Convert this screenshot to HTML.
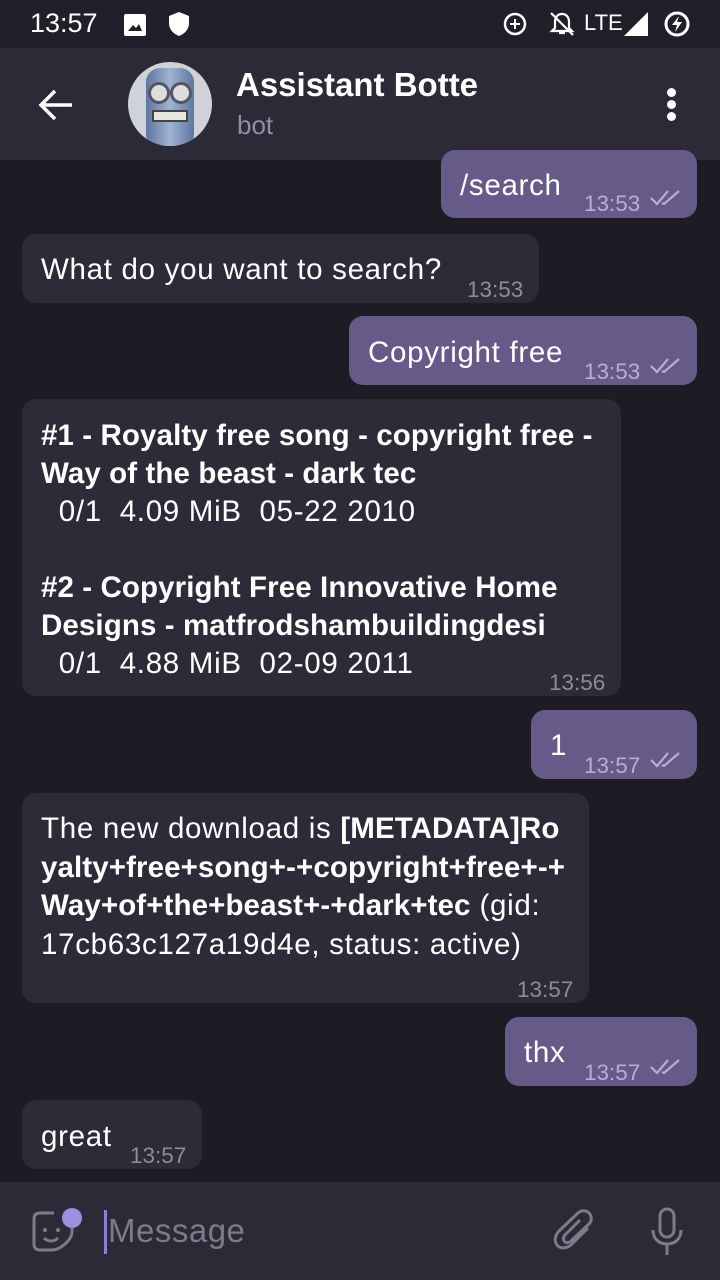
<!DOCTYPE html>
<html><head><meta charset="utf-8"><style>
*{margin:0;padding:0;box-sizing:border-box}
body{width:720px;height:1280px;background:#1d1b24;font-family:"Liberation Sans",sans-serif;position:relative;overflow:hidden;color:#fff}
.sb{position:absolute;top:0;left:0;width:720px;height:48px;background:#221f2b}
.hd{position:absolute;top:48px;left:0;width:720px;height:112px;background:#2d2a38}
.b{position:absolute;font-size:29.5px;line-height:38px;border-radius:14px;padding:0 19px;letter-spacing:.7px;white-space:nowrap}
.in{background:#2e2b38;left:22px}
.out{background:#655a88;right:23px}
.t{position:absolute;font-size:22.5px;color:#8f8b99;letter-spacing:0}
.out .t{color:#b7addb}
.ck{position:absolute}
b{font-weight:bold;letter-spacing:.1px}
.cp{position:absolute;top:1182px;left:0;width:720px;height:98px;background:#2d2a38}
</style></head><body>
<div class="sb">
<div style="position:absolute;left:30px;top:8px;font-size:27px">13:57</div>
<div style="position:absolute;left:124px;top:14px;width:22px;height:22px;background:#fff;border-radius:2px"><svg width="22" height="22"><path d="M4 17 L9 11 L12 14 L15 10 L18 17Z" fill="#221f2b"/></svg></div>
<svg style="position:absolute;left:168px;top:11px" width="22" height="26"><path d="M11 1 L21 5 V12 C21 19 16 23 11 25 C6 23 1 19 1 12 V5Z" fill="#fff"/></svg>
<svg style="position:absolute;left:502px;top:11px" width="26" height="26"><circle cx="13" cy="13" r="10" fill="none" stroke="#fff" stroke-width="2.5"/><path d="M13 8v10M8 13h10" stroke="#fff" stroke-width="2"/></svg>
<svg style="position:absolute;left:548px;top:10px" width="28" height="28"><path d="M14 4 C9 4 7 8 7 12 V18 L4 21 H24 L21 18 V12 C21 8 19 4 14 4Z M11 23 H17" fill="none" stroke="#fff" stroke-width="2.2"/><path d="M3 3 L25 25" stroke="#fff" stroke-width="2.2"/></svg>
<div style="position:absolute;left:584px;top:10px;font-size:22px">LTE</div>
<svg style="position:absolute;left:624px;top:12px" width="26" height="24"><path d="M24 0 V24 H0Z" fill="#fff"/></svg>
<svg style="position:absolute;left:662px;top:9px" width="30" height="30"><circle cx="15" cy="15" r="11" fill="none" stroke="#fff" stroke-width="3"/><path d="M17 7 L10 16 H15 L13 23 L20 13 H15Z" fill="#fff"/></svg>
</div>
<div class="hd">
<svg style="position:absolute;left:38px;top:40px" width="36" height="34"><path d="M34 17 H4 M17 3 L3 17 L17 31" fill="none" stroke="#fff" stroke-width="3.5"/></svg>
<div style="position:absolute;left:128px;top:14px;width:84px;height:84px;border-radius:50%;background:#cfd2d6;overflow:hidden">
<div style="position:absolute;left:18px;top:6px;width:48px;height:80px;border-radius:14px;background:linear-gradient(90deg,#5d76a0,#9fb3d2,#5d76a0)"></div>
<div style="position:absolute;left:20px;top:20px;width:22px;height:22px;border-radius:50%;background:#ddd;border:3px solid #556"></div>
<div style="position:absolute;left:42px;top:20px;width:22px;height:22px;border-radius:50%;background:#ddd;border:3px solid #556"></div>
<div style="position:absolute;left:24px;top:48px;width:36px;height:12px;background:#e8e8e0;border:2px solid #444"></div>
</div>
<div style="position:absolute;left:236px;top:18px;font-size:33px;font-weight:bold">Assistant Botte</div>
<div style="position:absolute;left:237px;top:62px;font-size:26px;color:#928da0">bot</div>
<div style="position:absolute;left:667px;top:40px;width:9px;height:9px;border-radius:50%;background:#fff;box-shadow:0 12px 0 #fff,0 24px 0 #fff"></div>
</div>

<div class="b out" style="top:150px;left:441px;right:auto;width:256px;height:68px;padding-top:17px">/search<span class="t" style="left:143px;top:35px">13:53</span><svg class="ck" style="left:208px;top:38px" width="36" height="20"><path d="M2 10 L8 16 L19 3 M13 15 L15 16 L30 3" fill="none" stroke="#b7addb" stroke-width="2.2"/></svg></div>

<div class="b in" style="top:234px;width:517px;height:69px;padding-top:17px">What do you want to search?<span class="t" style="left:445px;top:37px">13:53</span></div>

<div class="b out" style="top:316px;left:349px;right:auto;width:348px;height:69px;padding-top:18px">Copyright free<span class="t" style="left:235px;top:37px">13:53</span><svg class="ck" style="left:300px;top:40px" width="36" height="20"><path d="M2 10 L8 16 L19 3 M13 15 L15 16 L30 3" fill="none" stroke="#b7addb" stroke-width="2.2"/></svg></div>

<div class="b in" style="top:399px;width:599px;height:297px;padding-top:18px"><b>#1 - Royalty free song - copyright free -<br>Way of the beast - dark tec</b><br>&nbsp; 0/1&nbsp; 4.09 MiB&nbsp; 05-22 2010<br><br><b>#2 - Copyright Free Innovative Home<br>Designs - matfrodshambuildingdesi</b><br>&nbsp; 0/1&nbsp; 4.88 MiB&nbsp; 02-09 2011<span class="t" style="left:527px;top:265px">13:56</span></div>

<div class="b out" style="top:710px;left:531px;right:auto;width:166px;height:69px;padding-top:17px">1<span class="t" style="left:53px;top:37px">13:57</span><svg class="ck" style="left:118px;top:40px" width="36" height="20"><path d="M2 10 L8 16 L19 3 M13 15 L15 16 L30 3" fill="none" stroke="#b7addb" stroke-width="2.2"/></svg></div>

<div class="b in" style="top:793px;width:567px;height:210px;padding-top:17px;line-height:38.5px">The new download is <b>[METADATA]Ro<br>yalty+free+song+-+copyright+free+-+<br>Way+of+the+beast+-+dark+tec</b> (gid:<br>17cb63c127a19d4e, status: active)<span class="t" style="left:495px;top:178px">13:57</span></div>

<div class="b out" style="top:1017px;left:505px;right:auto;width:192px;height:69px;padding-top:17px">thx<span class="t" style="left:79px;top:37px">13:57</span><svg class="ck" style="left:144px;top:40px" width="36" height="20"><path d="M2 10 L8 16 L19 3 M13 15 L15 16 L30 3" fill="none" stroke="#b7addb" stroke-width="2.2"/></svg></div>

<div class="b in" style="top:1100px;width:180px;height:69px;padding-top:18px">great<span class="t" style="left:108px;top:37px">13:57</span></div>

<div class="cp">
<svg style="position:absolute;left:30px;top:26px" width="52" height="50"><path d="M24 5 H10 C6 5 4 7 4 11 V36 C4 40 6 42 10 42 H22 C30 42 42 32 42 24 V16" fill="none" stroke="#7e7a8a" stroke-width="3"/><circle cx="15" cy="22" r="2" fill="#7e7a8a"/><circle cx="28" cy="22" r="2" fill="#7e7a8a"/><path d="M14 30 C18 34 24 34 28 30" fill="none" stroke="#7e7a8a" stroke-width="3"/><circle cx="42" cy="10" r="10" fill="#9b8fe0"/></svg>
<div style="position:absolute;left:104px;top:28px;width:3px;height:44px;background:#8b7fd9"></div>
<div style="position:absolute;left:108px;top:30px;font-size:33px;color:#7e7a8a;letter-spacing:.5px">Message</div>
<svg style="position:absolute;left:552px;top:26px" width="46" height="48"><path d="M36 20 L20 36 C15 41 8 41 5 37 C2 33 3 27 7 23 L26 5 C29 2 34 2 37 5 C40 8 40 13 37 16 L19 33 C17 35 14 35 13 34 C11 32 11 29 13 27 L28 12" fill="none" stroke="#7e7a8a" stroke-width="3"/></svg>
<svg style="position:absolute;left:648px;top:24px" width="40" height="52"><rect x="12" y="3" width="14" height="28" rx="7" fill="none" stroke="#7e7a8a" stroke-width="3"/><path d="M5 24 C5 33 11 38 19 38 C27 38 33 33 33 24 M19 38 V49" fill="none" stroke="#7e7a8a" stroke-width="3"/></svg>
</div>
</body></html>
